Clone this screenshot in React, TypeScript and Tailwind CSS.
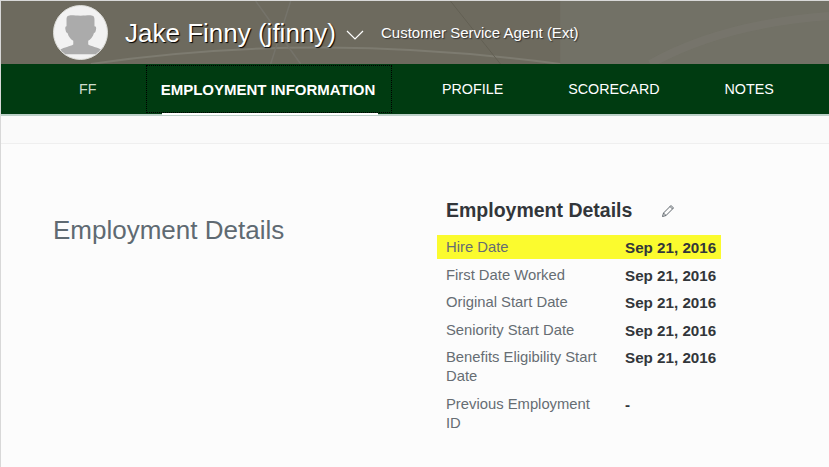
const font = { fontFamily: '"Liberation Sans", Arial, sans-serif' };

const rows = [
  { label: 'Hire Date', value: 'Sep 21, 2016', highlight: true },
  { label: 'First Date Worked', value: 'Sep 21, 2016' },
  { label: 'Original Start Date', value: 'Sep 21, 2016' },
  { label: 'Seniority Start Date', value: 'Sep 21, 2016' },
  { label: 'Benefits Eligibility Start Date', value: 'Sep 21, 2016' },
  { label: 'Previous Employment ID', value: '-' },
];

function Avatar() {
  return (
    <div className="h-[55px] w-[55px] shrink-0 overflow-hidden rounded-full border border-[#dcdcd8] bg-[#f2f2f2]">
      <svg viewBox="0 0 55 55" className="h-full w-full">
        <path
          d="M13 14c0-6 5-4 14.500-4S42 8 42 14v7c2 0 2 2 1.500 4-.3 2-1 3-2 3-1 4-4 7-6 8v4c3 2 10 3 13 5 1 1 1 3 1 5H6c0-2 0-4 1-5 3-2 10-3 13-5v-4c-2-1-5-4-6-8-1 0-1.700-1-2-3-.5-2-.5-4 1-4z"
          fill="#ababab"
        />
      </svg>
    </div>
  );
}

function Header() {
  return (
    <div className="relative flex h-[63px] items-center overflow-hidden bg-[#6d6a5e] pl-[52px]">
      <svg viewBox="0 0 829 63" className="absolute inset-0 h-full w-full" fill="none">
        <rect x="560" width="269" height="63" fill="#77766d" opacity="0.6" />
        <path d="M90 63C250 40 400 42 560 63" stroke="#7d7b70" strokeWidth="2" />
        <path d="M255 0l45 63M290 0l-20 63" stroke="#75736a" strokeWidth="1.500" />
        <path d="M450 0l50 63" stroke="#625f53" strokeWidth="1" />
        <path d="M650 63C700 35 760 20 829 15" stroke="#7c7b72" strokeWidth="8" opacity="0.4" />
      </svg>
      <div className="relative flex items-center">
        <Avatar />
        <span className="ml-[17px] text-[26px] leading-none text-white [text-shadow:1px_1px_1px_#000]">
          Jake Finny (jfinny)
        </span>
        <svg viewBox="0 0 18 10" className="ml-[10px] mt-[5px] h-[10px] w-[18px]" fill="none" stroke="#fff" strokeWidth="1.200">
          <path d="M1 1l8 8 8-8" />
        </svg>
        <span className="ml-[17px] text-[15px] leading-none text-white [text-shadow:1px_1px_1px_#333]">
          Customer Service Agent (Ext)
        </span>
      </div>
    </div>
  );
}

function Tabs() {
  return (
    <div className="h-[52px] bg-[#bcd0c8]">
      <div className="flex h-[50px] items-center bg-[#003b11] pt-[2px] text-[14.300px] text-white">
        <div className="w-[145px] pl-[78px] text-[#cfdccf]">FF</div>
        <div className="relative -mt-[2px] flex h-[48px] w-[246px] items-center justify-center border border-dotted border-black pt-[2px] text-[15px] font-bold">
          <span className="-ml-[2px]">EMPLOYMENT INFORMATION</span>
          <div className="absolute -bottom-[3px] left-[15px] h-[2px] w-[216px] bg-white" />
        </div>
        <div className="ml-[50px]">PROFILE</div>
        <div className="ml-[65px]">SCORECARD</div>
        <div className="ml-[65px]">NOTES</div>
      </div>
    </div>
  );
}

export default function App() {
  return (
    <div className="h-[467px] w-[829px] overflow-hidden border-l border-t border-[#d8d8d8] bg-[#fcfcfc]" style={font}>
      <Header />
      <Tabs />
      <div className="h-[28px] border-b border-[#efefef] bg-[#fafafa]" />
      <div className="flex">
        <div className="w-[436px] pl-[52px] pt-[72px] text-[26px] leading-[29px] text-[#5f6a72]">
          Employment Details
        </div>
        <div className="w-[284px] pt-[55px]">
          <div className="flex items-center pl-[9px] text-[19.500px] font-bold leading-[23px] text-[#32363a]">
            Employment Details
            <svg viewBox="0 0 14 14" className="ml-[29px] h-[14px] w-[14px]" fill="none" stroke="#5f666c" strokeWidth="1">
              <path d="M1.500 12.500l1-3.500 7.500-7.500 2.500 2.500-7.500 7.500zM2.500 9l2.500 2.500M9 2.500l2.500 2.500" />
            </svg>
          </div>
          <div className="mt-[13px] flex flex-col gap-[8.500px]">
            {rows.map((row) => (
              <div
                key={row.label}
                className={`grid grid-cols-[179px_92px] pl-[9px] text-[14.800px] leading-[19px] ${row.highlight ? '-mb-[2px] bg-[#fbfb2e] py-[2.500px]' : ''}`}
              >
                <div className="w-[158px] text-[#666d73]">{row.label}</div>
                <div className="whitespace-nowrap text-[15.200px] font-bold text-[#32363a]">{row.value}</div>
              </div>
            ))}
          </div>
        </div>
      </div>
    </div>
  );
}
